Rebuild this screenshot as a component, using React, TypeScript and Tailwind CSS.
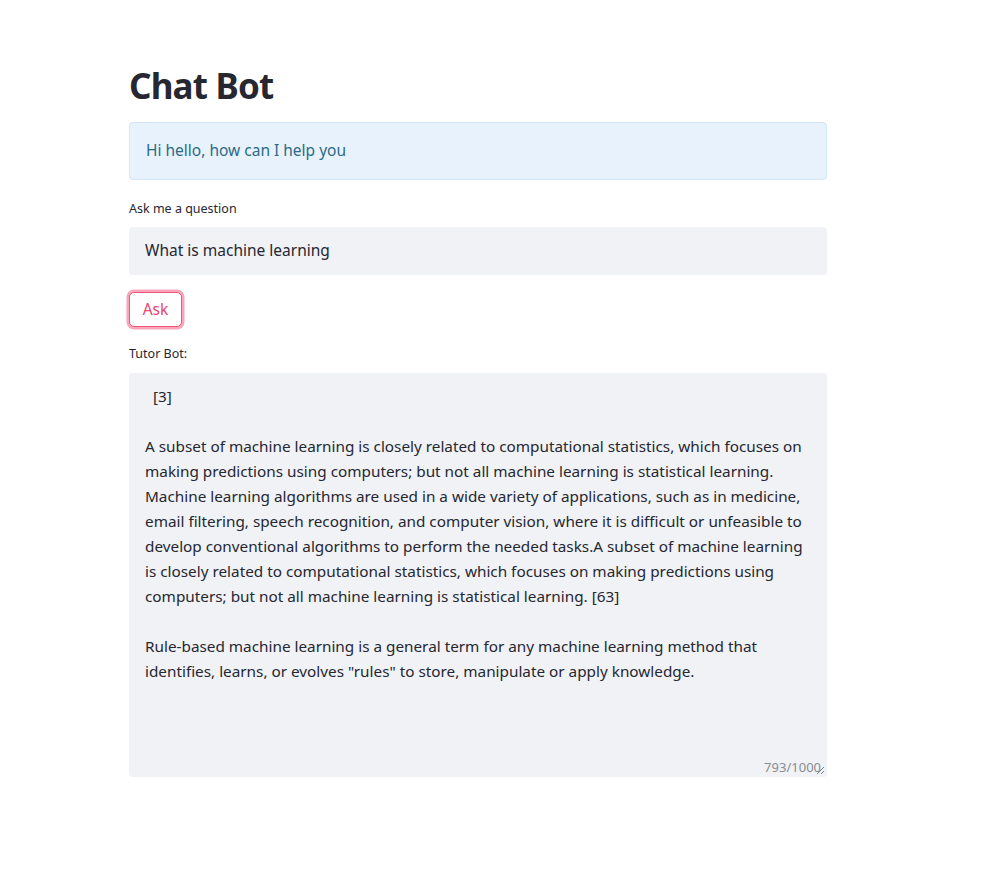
import React from "react";

const lines: string[] = [
  "\u00a0\u00a0[3]",
  "\u00a0",
  "A subset of machine learning is closely related to computational statistics, which focuses on",
  "making predictions using computers; but not all machine learning is statistical learning.",
  "Machine learning algorithms are used in a wide variety of applications, such as in medicine,",
  "email filtering, speech recognition, and computer vision, where it is difficult or unfeasible to",
  "develop conventional algorithms to perform the needed tasks.A subset of machine learning",
  "is closely related to computational statistics, which focuses on making predictions using",
  "computers; but not all machine learning is statistical learning. [63]",
  "\u00a0",
  "Rule-based machine learning is a general term for any machine learning method that",
  "identifies, learns, or evolves \"rules\" to store, manipulate or apply knowledge.",
];

export default function App() {
  return (
    <div
      className="min-h-[891px] bg-white text-[#262730]"
      style={{ fontFamily: '"Noto Sans", "Open Sans", sans-serif' }}
    >
      <div className="ml-[129px] w-[698px] pt-[62px]">
        <h1 className="text-[35px] font-bold leading-[48px] tracking-[-0.8px] text-[#262730]">
          Chat Bot
        </h1>
        <div className="mt-[12px] flex h-[58px] items-center rounded-[4px] border border-[#d3e5f7] bg-[#e8f2fc] px-[16px] text-[15.5px] text-[#2c6a88]">
          Hi hello, how can I help you
        </div>
        <div className="mt-[21px] text-[12.5px] leading-[16px] text-[#262730]">
          Ask me a question
        </div>
        <div className="mt-[10px] flex h-[48px] items-center rounded-[4px] bg-[#f0f2f6] px-[16px] text-[15.5px] text-[#262730]">
          What is machine learning
        </div>
        <div className="mt-[17px]">
          <button className="flex h-[35px] w-[53px] items-center justify-center rounded-[5px] border border-[#f0557a] bg-white text-[15.5px] text-[#e8446b] shadow-[0_0_0_2.5px_rgba(246,93,130,0.55)]">
            Ask
          </button>
        </div>
        <div className="mt-[19px] text-[12.5px] leading-[16px] text-[#262730]">
          Tutor Bot:
        </div>
        <div className="relative mt-[11px] h-[404px] rounded-[4px] bg-[#f0f2f6] px-[16px] pt-[11px] text-[15.3px] leading-[25px] text-[#262730]">
          {lines.map((l, i) => (
            <div key={i} className="whitespace-pre">
              {l}
            </div>
          ))}
          <div className="absolute bottom-[2px] right-[6px] text-[13px] leading-[16px] text-[#8a8c94]">
            793/1000
          </div>
          <svg
            className="absolute bottom-[2px] right-[2px]"
            width="9"
            height="9"
            viewBox="0 0 9 9"
          >
            <path d="M8 1 L1 8 M8 5 L5 8" stroke="#7a7c84" strokeWidth="1" />
          </svg>
        </div>
      </div>
    </div>
  );
}
